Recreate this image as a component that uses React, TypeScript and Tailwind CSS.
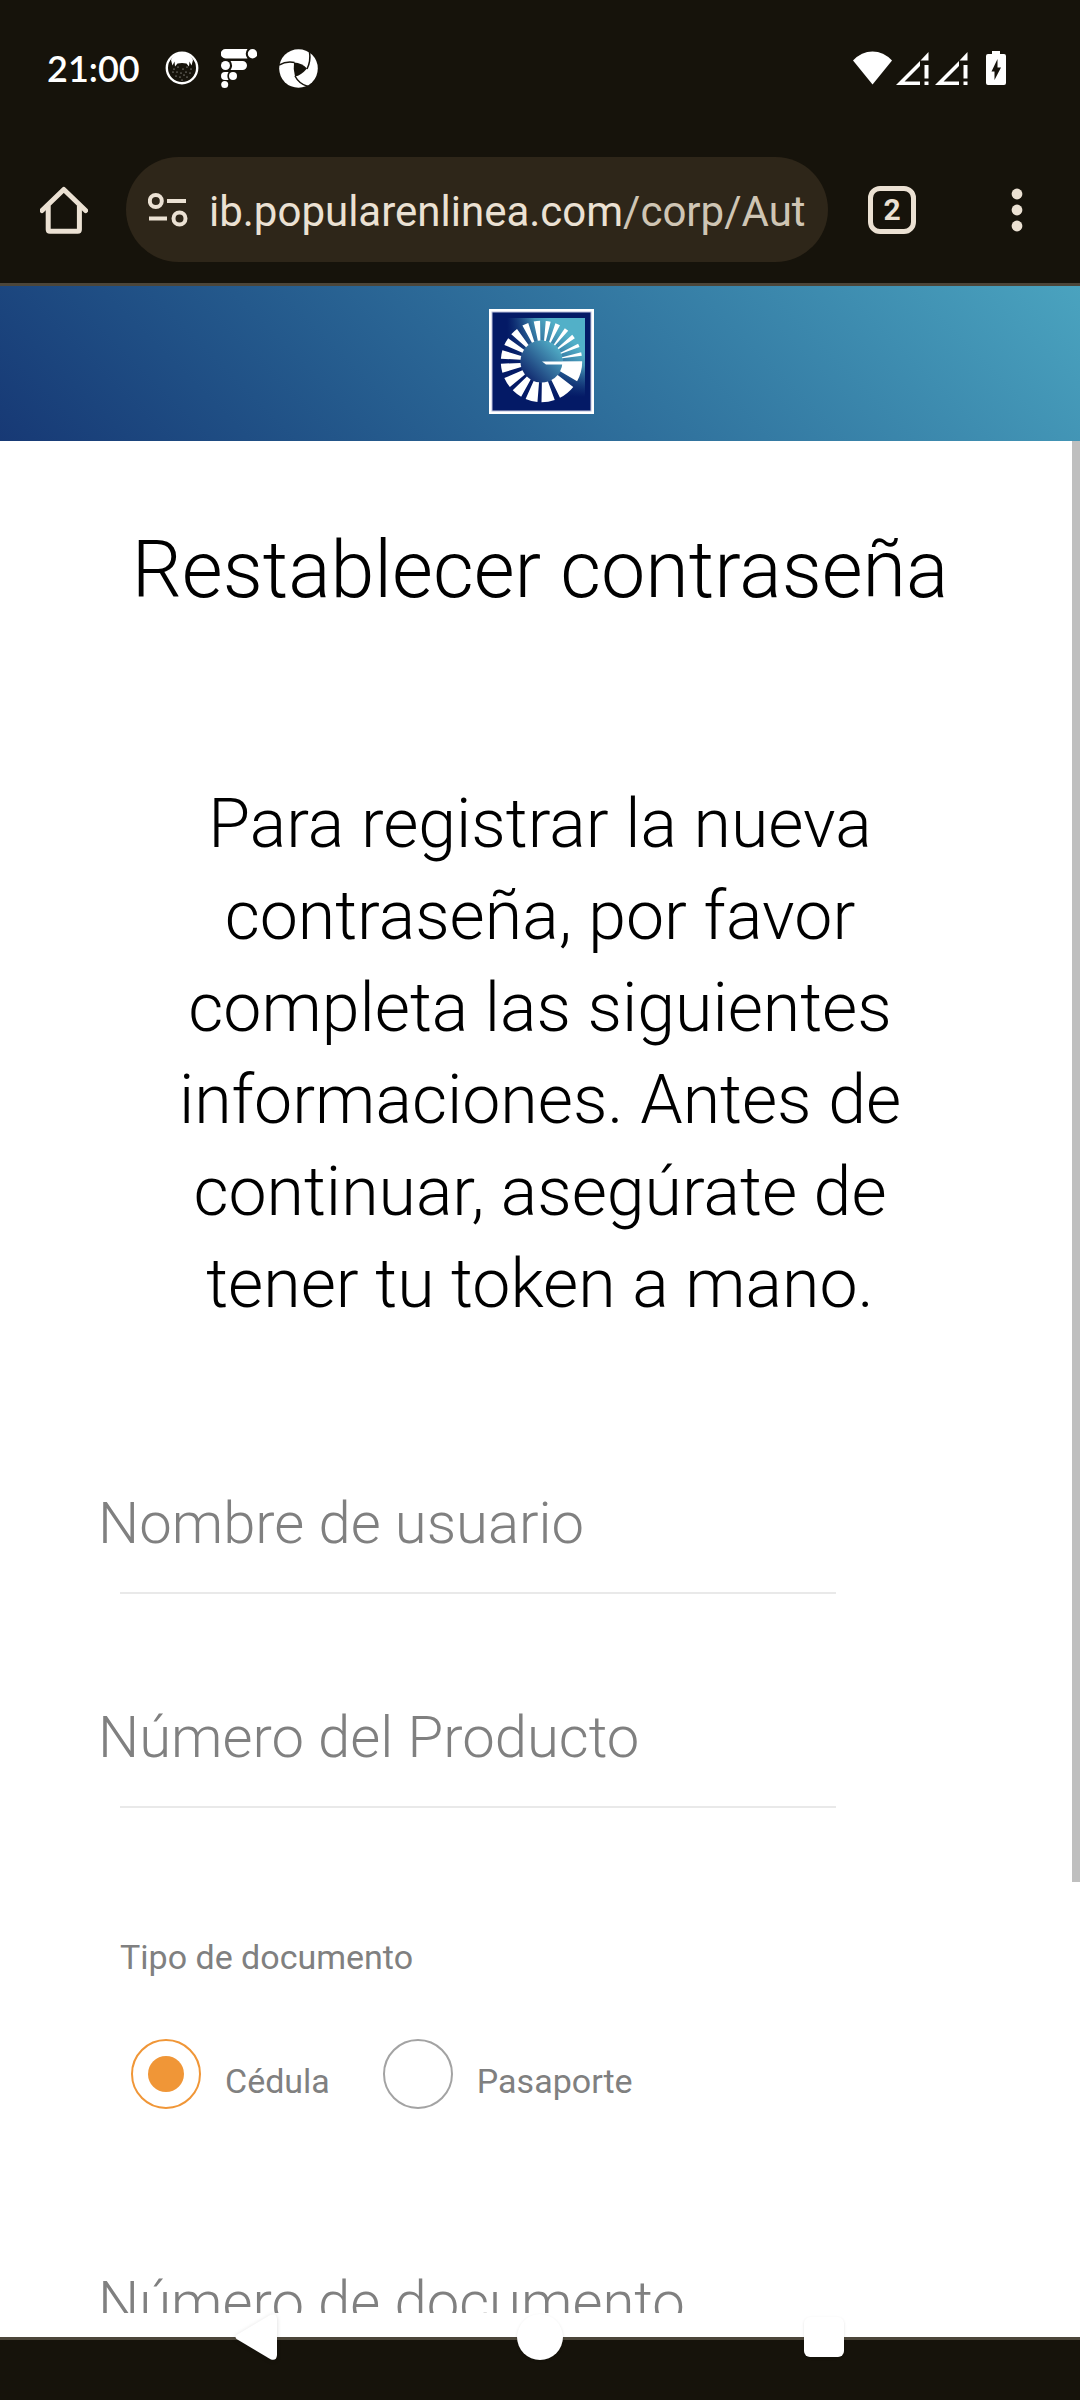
import { useState } from "react";

/* Start and end angle of every ray of the bank emblem, clockwise from the right. */
const RAYS: [number, number][] = [
  [0, 29], [38.7, 63], [71, 90], [95.7, 113], [120, 135], [141, 156], [164, 177],
  [184, 196], [204, 215], [222, 233], [242, 251], [259, 268], [276, 283], [290, 297],
  [305, 311], [319, 325], [334, 339], [347, 352],
];

function rayPath([from, to]: [number, number]) {
  const at = (radius: number, angle: number) => {
    const rad = (angle * Math.PI) / 180;
    return `${(52.5 + radius * Math.cos(rad)).toFixed(2)} ${(52.5 + radius * Math.sin(rad)).toFixed(2)}`;
  };
  return `M${at(21, from + 1)} L${at(40.7, from)} A40.7 40.7 0 0 1 ${at(40.7, to)} L${at(21, to - 1)} A21 21 0 0 0 ${at(21, from + 1)}Z`;
}

function BankLogo() {
  return (
    <svg className="size-[105px]" viewBox="0 0 105 105" role="img" aria-label="Popular en línea">
      <defs>
        <linearGradient id="sky" x1="1" y1="0" x2="0.25" y2="0.75">
          <stop offset="0.3" stopColor="#52b0c8" />
          <stop offset="1" stopColor="#52b0c8" stopOpacity="0" />
        </linearGradient>
        <linearGradient id="disc" x1="1" y1="0" x2="0" y2="1">
          <stop offset="0.15" stopColor="#50abc5" />
          <stop offset="0.85" stopColor="#122b70" />
        </linearGradient>
        <linearGradient id="fadeX" x1="0" x2="1">
          <stop offset="0" stopColor="#041a66" />
          <stop offset="0.35" stopColor="#041a66" stopOpacity="0" />
        </linearGradient>
        <linearGradient id="fadeY" x1="0" x2="0" y1="1" y2="0">
          <stop offset="0" stopColor="#041a66" />
          <stop offset="0.4" stopColor="#041a66" stopOpacity="0" />
        </linearGradient>
      </defs>
      <rect width="105" height="105" fill="#fff" />
      <rect x="3" y="3" width="99" height="99" fill="#041a66" stroke="#b9bedb" strokeWidth="1" />
      <rect x="18" y="9" width="78" height="79" fill="url(#sky)" />
      <rect x="18" y="9" width="78" height="79" fill="url(#fadeX)" />
      <rect x="18" y="9" width="78" height="79" fill="url(#fadeY)" />
      <circle cx="52.5" cy="52.5" r="21.5" fill="url(#disc)" />
      {RAYS.map((ray) => (
        <path key={ray[0]} d={rayPath(ray)} fill="#fff" />
      ))}
      <path d="M53 52.5H93V55.5H57Z" fill="#fff" />
    </svg>
  );
}

function CatIcon() {
  return (
    <svg className="size-[34px]" viewBox="0 0 34 34" fill="#fff" aria-hidden="true">
      <circle cx="17" cy="17" r="15.2" fill="none" stroke="#fff" strokeWidth="2.4" />
      <path d="M6 9C8 4 12 2 17 2S26 4 28 9L26.500 14.500L24.500 10.500L24 15.500L21.500 12.500Q17 11.500 12.500 12.500L10 15.500L9.500 10.500L7.500 14.500Z" />
      {[[9, 18], [13, 16], [18, 18], [22, 16], [26, 18], [8, 21], [12, 21], [16, 22], [21, 21], [25, 22], [11, 25], [15, 26], [19, 24], [22, 26], [17, 29]].map(
        ([x, y]) => (
          <circle key={`${x}-${y}`} cx={x} cy={y} r="0.5" />
        ),
      )}
    </svg>
  );
}

function PillsIcon() {
  return (
    <svg className="h-[39px] w-[36px]" viewBox="0 0 36 39" fill="#fff" aria-hidden="true">
      <path d="M4.500 0H26.500A8 8 0 0 0 26.500 9.500H4.500A4.750 4.750 0 0 1 4.500 0Z" />
      <circle cx="31.500" cy="4.800" r="4.700" />
      <circle cx="4.500" cy="16.500" r="4.500" />
      <path d="M9.500 12H21.500A4.500 4.500 0 0 1 21.500 21H9.500A8 8 0 0 0 9.500 12Z" />
      <path d="M4 23H7.500A8 8 0 0 0 7.500 31H4A4 4 0 0 1 4 23Z" />
      <circle cx="12" cy="27" r="4" />
      <circle cx="3.700" cy="35.500" r="3.500" />
    </svg>
  );
}

function PinwheelIcon() {
  return (
    <svg className="size-[39px]" viewBox="0 0 39 39" aria-hidden="true">
      <circle cx="19.500" cy="19.500" r="19.300" fill="#fff" />
      <path d="M15 13.500Q23 14 28 19.500Q22 26.500 16 27.500Q14 20 15 13.500Z" fill="#16130b" />
      <g fill="none" stroke="#16130b" strokeWidth="1.500">
        <path d="M0 16Q7 12 15.500 13.500" />
        <path d="M28 20Q32 12 30.500 3" />
        <path d="M16 27Q20 35 29 37.500" />
      </g>
      <path d="M33 35.500H36.500" stroke="#16130b" strokeWidth="2" />
    </svg>
  );
}

function SignalIcon() {
  return (
    <svg className="h-[33px] w-[33px]" viewBox="0 0 33 33" fill="#fff" aria-hidden="true">
      <path d="M0 33L24 9V14L8.500 29.500H24V33Z" />
      <path d="M24.500 8.500L32.500 0V8.500Z" />
      <path d="M28.500 13H32.500V26.500H28.500ZM28.500 29.500H32.500V33H28.500Z" />
    </svg>
  );
}

function StatusBar() {
  return (
    <div className="flex h-[136px] shrink-0 items-center pr-[74px] pl-[47px]">
      <span className="font-[Lato] text-[36px] leading-none font-semibold text-white">21:00</span>
      <div className="ml-[25px] flex items-center gap-[22px]">
        <CatIcon />
        <PillsIcon />
        <PinwheelIcon />
      </div>
      <div className="ml-auto flex items-center">
        <svg className="h-[34px] w-[39px]" viewBox="0 0 39 34" fill="#fff" aria-hidden="true">
          <path d="M0 9.500Q8.500 0.500 19.500 0.500T39 9.500L19.500 33.500Z" />
        </svg>
        <div className="ml-1 flex gap-1.5">
          <SignalIcon />
          <SignalIcon />
        </div>
        <svg className="ml-[18px] h-[34px] w-[20px]" viewBox="0 0 20 34" aria-hidden="true">
          <path d="M6 0H14V3H18Q20 3 20 5V32Q20 34 18 34H2Q0 34 0 32V5Q0 3 2 3H6Z" fill="#fff" />
          <path d="M11.500 8V16.500H15L8.500 29V20.500H5.500Z" fill="#16130b" />
        </svg>
      </div>
    </div>
  );
}

function BrowserBar() {
  return (
    <div className="flex h-[147px] shrink-0 items-center pr-[55px] pl-10 text-[#ebe1d3]">
      <button type="button" aria-label="Inicio" className="mr-[38px]">
        <svg className="size-12" viewBox="0 0 48 48" fill="none" stroke="currentColor" strokeWidth="5" aria-hidden="true">
          <path d="M2 24.500L23.800 3.500L45.600 24.500" strokeLinecap="round" strokeLinejoin="round" />
          <path d="M8.200 19.500V43.500Q8.200 45.200 9.900 45.200H37.700Q39.400 45.200 39.400 43.500V19.500" />
        </svg>
      </button>
      <div className="flex h-[105px] min-w-0 flex-1 items-center rounded-full bg-[#2e2619] pr-4 pl-[22px]">
        <button type="button" aria-label="Información del sitio" className="mr-[21px] shrink-0">
          <svg className="h-[34px] w-10" viewBox="0 0 40 34" fill="none" stroke="currentColor" strokeWidth="4" aria-hidden="true">
            <circle cx="7.800" cy="8" r="6" />
            <path d="M19 8H38M1 25.500H19" />
            <circle cx="31.500" cy="25.500" r="6" />
          </svg>
        </button>
        <button type="button" className="min-w-0 overflow-hidden pt-1 text-left text-[42px] leading-[52px] whitespace-nowrap">
          ib.popularenlinea.com<span className="text-[#cfc5b4]">/corp/Aut</span>
        </button>
      </div>
      <button
        type="button"
        aria-label="2 pestañas"
        className="ml-10 flex size-12 items-center justify-center rounded-xl border-5 border-current text-[30px] leading-none font-bold"
      >
        2
      </button>
      <button type="button" aria-label="Más opciones" className="ml-[93px]">
        <svg className="h-11 w-4" viewBox="0 0 16 44" fill="currentColor" aria-hidden="true">
          <circle cx="8" cy="6" r="5.400" />
          <circle cx="8" cy="22" r="5.400" />
          <circle cx="8" cy="38" r="5.400" />
        </svg>
      </button>
    </div>
  );
}

function Field({ id, label }: { id: string; label: string }) {
  return (
    <div className="relative h-[120px] w-[738px] max-w-full pl-[22px]">
      <label htmlFor={id} className="absolute top-4 left-0 text-[58px] leading-[66px] font-light whitespace-nowrap text-[#808080]">
        {label}
      </label>
      <input
        id={id}
        type="text"
        className="h-full w-full border-b-2 border-[#e9e9e9] bg-transparent text-[58px] font-light outline-none"
      />
    </div>
  );
}

const DOCUMENTS = ["Cédula", "Pasaporte"];

function DocumentType() {
  const [selected, setSelected] = useState("Cédula");
  return (
    <fieldset className="pl-[22px] text-[34px] leading-10 text-[#808080]">
      <legend>Tipo de documento</legend>
      <div className="mt-[62px] flex gap-[53px] pl-[11px]">
        {DOCUMENTS.map((name) => (
          <div key={name} className="flex items-center gap-6">
            <input
              id={name}
              type="radio"
              name="documento"
              checked={selected === name}
              onChange={() => setSelected(name)}
              className="grid size-[70px] appearance-none place-content-center rounded-full border-2 border-[#a3a3a3] before:size-9 before:rounded-full checked:border-[#f09637] checked:before:bg-[#f09637]"
            />
            <label htmlFor={name} className="pt-3.5">
              {name}
            </label>
          </div>
        ))}
      </div>
    </fieldset>
  );
}

function NavigationBar() {
  return (
    <nav className="relative h-[63px] shrink-0 border-t-3 border-[#4c463a] bg-[#16130b]">
      <div className="absolute inset-x-0 -top-[27px] mx-auto grid w-[79%] grid-cols-3 place-items-center">
        <button type="button" aria-label="Atrás">
          <svg className="size-12 drop-shadow-sm" viewBox="0 0 48 48" fill="#fff" aria-hidden="true">
            <path d="M4.500 22Q2.500 24 4.500 26L38.500 46.300Q44.500 48.500 45 42V6Q44.500 -0.500 38.500 1.700Z" />
          </svg>
        </button>
        <button type="button" aria-label="Inicio del sistema" className="size-[46px] rounded-full bg-white shadow-sm" />
        <button type="button" aria-label="Recientes" className="size-10 rounded-md bg-white shadow-sm" />
      </div>
    </nav>
  );
}

export default function App() {
  return (
    <div className="flex h-screen flex-col bg-[#16130b] font-[Roboto,sans-serif]">
      <StatusBar />
      <BrowserBar />
      <header className="flex h-[158px] shrink-0 justify-center border-t-3 border-[#4c463a] bg-linear-45 from-[#173975] to-[#4aa3bf] bg-origin-padding pt-[23px] pl-0.5">
        <BankLogo />
      </header>
      <div className="relative flex min-h-0 flex-1 flex-col bg-white pb-6">
        <main className="min-h-0 flex-1 overflow-hidden pt-[81px] text-black">
          <h1 className="text-center text-[79px] leading-[96px] font-light">Restablecer contraseña</h1>
          <p className="mt-40 px-40 text-center text-[68px] leading-[92px] font-light">
            Para registrar la nueva contraseña, por favor completa las siguientes informaciones. Antes de continuar,
            asegúrate de tener tu token a mano.
          </p>
          <form className="mt-36 px-[98px]">
            <div className="flex flex-col gap-[94px]">
              <Field id="usuario" label="Nombre de usuario" />
              <Field id="producto" label="Número del Producto" />
            </div>
            <div className="mt-[129px] mb-36">
              <DocumentType />
            </div>
            <Field id="numero-documento" label="Número de documento" />
          </form>
        </main>
        <div className="absolute top-0 right-0 h-[76%] w-2 bg-[#bfbfbf]" />
      </div>
      <NavigationBar />
    </div>
  );
}
